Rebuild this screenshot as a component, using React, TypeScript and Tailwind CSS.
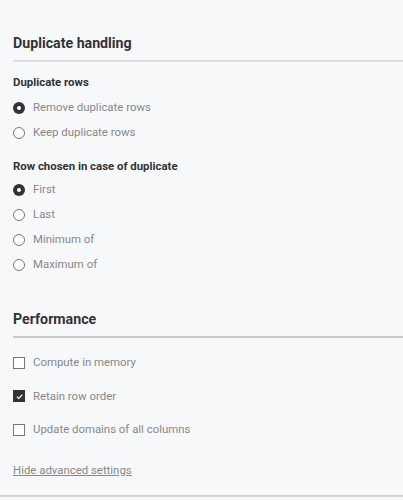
import { useState } from 'react';

function Radio({ label, checked, onClick }: { label: string; checked: boolean; onClick: () => void }) {
  return (
    <label className="flex items-center h-[25px] cursor-pointer" onClick={onClick}>
      <span
        className={
          'w-[12px] h-[12px] rounded-full flex items-center justify-center shrink-0 ' +
          (checked ? 'bg-[#333]' : 'border border-[#777] bg-white')
        }
      >
        {checked && <span className="w-[4px] h-[4px] rounded-full bg-white" />}
      </span>
      <span className="ml-[8px] text-[11.4px] text-[#888]">{label}</span>
    </label>
  );
}

function Check({ label, checked, onClick }: { label: string; checked: boolean; onClick: () => void }) {
  return (
    <label className="flex items-center h-[33.5px] cursor-pointer" onClick={onClick}>
      <span
        className={
          'w-[12px] h-[12px] flex items-center justify-center shrink-0 ' +
          (checked ? 'bg-[#333]' : 'border border-[#777] bg-white')
        }
      >
        {checked && (
          <svg width="9" height="9" viewBox="0 0 10 10" fill="none">
            <path d="M2 5.2 L4.2 7.2 L8.2 3" stroke="white" strokeWidth="1.3" />
          </svg>
        )}
      </span>
      <span className="ml-[8px] text-[11.4px] text-[#888]">{label}</span>
    </label>
  );
}

export default function App() {
  const [dup, setDup] = useState('remove');
  const [chosen, setChosen] = useState('first');
  const [opts, setOpts] = useState({ memory: false, order: true, domains: false });

  return (
    <div className="w-[403px] h-[500px] bg-[#f7f8fa] font-['Roboto',sans-serif] overflow-hidden">
      <div className="pl-[13px] pt-[33px]">
        <h2 className="text-[14.2px] font-bold text-[#333] leading-[20px]">Duplicate handling</h2>
        <div className="mt-[7px] h-[2px] bg-[#dcdddf]" />

        <h3 className="mt-[12px] text-[11.4px] font-bold text-[#333] leading-[16px]">Duplicate rows</h3>
        <div className="mt-[5px] flex flex-col">
          <Radio label="Remove duplicate rows" checked={dup === 'remove'} onClick={() => setDup('remove')} />
          <Radio label="Keep duplicate rows" checked={dup === 'keep'} onClick={() => setDup('keep')} />
        </div>

        <h3 className="mt-[13px] text-[11.4px] font-bold text-[#333] leading-[16px]">Row chosen in case of duplicate</h3>
        <div className="mt-[3px] flex flex-col">
          <Radio label="First" checked={chosen === 'first'} onClick={() => setChosen('first')} />
          <Radio label="Last" checked={chosen === 'last'} onClick={() => setChosen('last')} />
          <Radio label="Minimum of" checked={chosen === 'min'} onClick={() => setChosen('min')} />
          <Radio label="Maximum of" checked={chosen === 'max'} onClick={() => setChosen('max')} />
        </div>

        <h2 className="mt-[32px] text-[14.2px] font-bold text-[#333] leading-[20px]">Performance</h2>
        <div className="mt-[7px] h-[2px] bg-[#c9cacc]" />

        <div className="mt-[8px] flex flex-col">
          <Check label="Compute in memory" checked={opts.memory} onClick={() => setOpts({ ...opts, memory: !opts.memory })} />
          <Check label="Retain row order" checked={opts.order} onClick={() => setOpts({ ...opts, order: !opts.order })} />
          <Check label="Update domains of all columns" checked={opts.domains} onClick={() => setOpts({ ...opts, domains: !opts.domains })} />
        </div>

        <a className="block mt-[15px] text-[11.4px] text-[#888] underline leading-[16px] cursor-pointer">Hide advanced settings</a>
      </div>
      <div className="mt-[17px] h-[2px] bg-[#d2d3d5]" />
    </div>
  );
}
